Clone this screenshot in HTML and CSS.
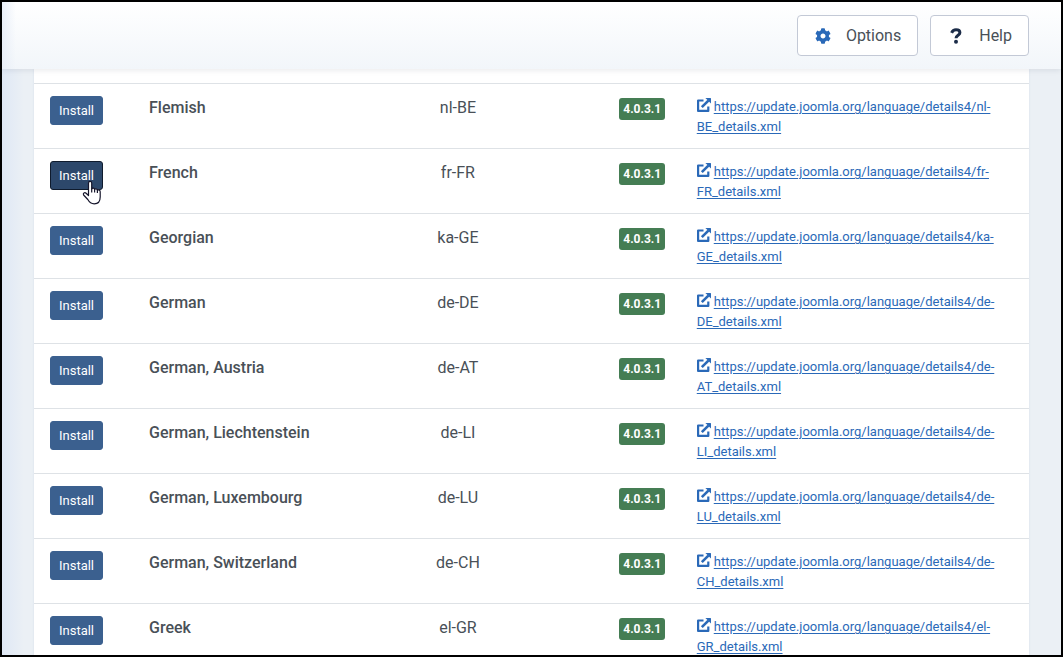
FILE: index.html
```
<!DOCTYPE html>
<html lang="en">
<head>
<meta charset="utf-8">
<title>Install Languages</title>
<link rel="stylesheet" href="styles.css">
</head>
<body>
<svg class="symbols" aria-hidden="true">
  <symbol id="external" viewBox="0 0 14 14">
    <path d="M6.500 2.500H1.100V12.900H11.300V8.500" fill="none" stroke="currentColor" stroke-width="2.200" stroke-linejoin="round"/>
    <path d="M4.800 9.200L11.400 2.600" fill="none" stroke="currentColor" stroke-width="2.600"/>
    <path d="M8.400 0H13.500Q14 0 14 .5V5.600z" fill="currentColor"/>
  </symbol>
</svg>
<header class="toolbar">
  <button class="tool" type="button">
    <svg class="tool-icon gear" viewBox="0 0 512 512" aria-hidden="true"><path fill="currentColor" d="M487.400 315.700l-42.600-24.600c4.300-23.200 4.300-47 0-70.200l42.600-24.600c4.900-2.800 7.100-8.600 5.500-14-11.100-35.600-30-67.800-54.700-94.600-3.800-4.100-10-5.100-14.800-2.300L380.800 110c-17.900-15.400-38.500-27.300-60.800-35.100V25.800c0-5.600-3.900-10.500-9.400-11.700-36.700-8.200-74.300-7.800-109.200 0-5.500 1.200-9.400 6.100-9.400 11.700V75c-22.200 7.900-42.800 19.800-60.800 35.100L88.700 85.500c-4.900-2.800-11-1.900-14.800 2.300-24.700 26.700-43.600 58.900-54.700 94.600-1.700 5.400.6 11.200 5.500 14L67.300 221c-4.300 23.200-4.300 47 0 70.200l-42.600 24.600c-4.900 2.800-7.100 8.600-5.500 14 11.100 35.600 30 67.800 54.700 94.600 3.800 4.100 10 5.100 14.800 2.300l42.600-24.600c17.900 15.400 38.500 27.300 60.800 35.100v49.200c0 5.600 3.900 10.500 9.400 11.700 36.700 8.200 74.300 7.800 109.200 0 5.500-1.200 9.400-6.100 9.400-11.700v-49.200c22.200-7.900 42.800-19.800 60.800-35.100l42.600 24.600c4.900 2.800 11 1.900 14.800-2.300 24.700-26.700 43.600-58.900 54.700-94.600 1.500-5.500-.7-11.300-5.600-14.100zM256 336c-44.100 0-80-35.900-80-80s35.900-80 80-80 80 35.900 80 80-35.900 80-80 80z"/></svg>
    Options
  </button>
  <button class="tool" type="button">
    <svg class="tool-icon question" viewBox="0 0 16 16" aria-hidden="true"><path d="M3.600 4.900C4.500 2.700 5.900 1.800 8 1.800c2.300 0 3.900 1 3.900 2.900 0 2.700-3.900 2.400-3.900 5.500" fill="none" stroke="currentColor" stroke-width="3"/><circle cx="8" cy="13.800" r="2" fill="currentColor"/></svg>
    Help
  </button>
</header>
<main class="page">
  <table class="languages">
    <colgroup><col class="col-action"><col class="col-name"><col><col class="col-version"><col class="col-location"></colgroup>
    <tbody>
      <tr>
        <td><button class="install" type="button">Install</button></td>
        <th scope="row">Flemish</th><td class="center">nl-BE</td>
        <td class="center"><span class="badge">4.0.3.1</span></td>
        <td class="location"><svg class="external" aria-hidden="true"><use href="#external"/></svg><a href="#">https://update.joomla.org/language/details4/nl-BE_details.xml</a></td>
      </tr>
      <tr>
        <td><span class="pointed"><button class="install active" type="button">Install</button><svg class="cursor" viewBox="0 0 20 25" aria-hidden="true"><path d="M6.500 15.500V3.200c0-2.400 3.200-2.400 3.200 0V9c.3-1.300 2.800-1.200 2.900.5.500-1.100 2.700-.9 2.800.9.600-1 2.800-.6 2.800 1.300V17c0 4.300-2 6.800-6 6.800-3.500 0-4.900-1.600-6.400-4.300L1.600 15c-1-1.900 1.100-3 2.500-1.800z" fill="#fff" stroke="#15152b" stroke-width="1.200" stroke-linejoin="round"/><path d="M9.700 8.500v4M12.600 9.500v3M15.400 10.500v2.500" fill="none" stroke="#15152b" stroke-width="1.200"/></svg></span></td>
        <th scope="row">French</th><td class="center">fr-FR</td>
        <td class="center"><span class="badge">4.0.3.1</span></td>
        <td class="location"><svg class="external" aria-hidden="true"><use href="#external"/></svg><a href="#">https://update.joomla.org/language/details4/fr-FR_details.xml</a></td>
      </tr>
      <tr>
        <td><button class="install" type="button">Install</button></td>
        <th scope="row">Georgian</th><td class="center">ka-GE</td>
        <td class="center"><span class="badge">4.0.3.1</span></td>
        <td class="location"><svg class="external" aria-hidden="true"><use href="#external"/></svg><a href="#">https://update.joomla.org/language/details4/ka-GE_details.xml</a></td>
      </tr>
      <tr>
        <td><button class="install" type="button">Install</button></td>
        <th scope="row">German</th><td class="center">de-DE</td>
        <td class="center"><span class="badge">4.0.3.1</span></td>
        <td class="location"><svg class="external" aria-hidden="true"><use href="#external"/></svg><a href="#">https://update.joomla.org/language/details4/de-DE_details.xml</a></td>
      </tr>
      <tr>
        <td><button class="install" type="button">Install</button></td>
        <th scope="row">German, Austria</th><td class="center">de-AT</td>
        <td class="center"><span class="badge">4.0.3.1</span></td>
        <td class="location"><svg class="external" aria-hidden="true"><use href="#external"/></svg><a href="#">https://update.joomla.org/language/details4/de-AT_details.xml</a></td>
      </tr>
      <tr>
        <td><button class="install" type="button">Install</button></td>
        <th scope="row">German, Liechtenstein</th><td class="center">de-LI</td>
        <td class="center"><span class="badge">4.0.3.1</span></td>
        <td class="location"><svg class="external" aria-hidden="true"><use href="#external"/></svg><a href="#">https://update.joomla.org/language/details4/de-LI_details.xml</a></td>
      </tr>
      <tr>
        <td><button class="install" type="button">Install</button></td>
        <th scope="row">German, Luxembourg</th><td class="center">de-LU</td>
        <td class="center"><span class="badge">4.0.3.1</span></td>
        <td class="location"><svg class="external" aria-hidden="true"><use href="#external"/></svg><a href="#">https://update.joomla.org/language/details4/de-LU_details.xml</a></td>
      </tr>
      <tr>
        <td><button class="install" type="button">Install</button></td>
        <th scope="row">German, Switzerland</th><td class="center">de-CH</td>
        <td class="center"><span class="badge">4.0.3.1</span></td>
        <td class="location"><svg class="external" aria-hidden="true"><use href="#external"/></svg><a href="#">https://update.joomla.org/language/details4/de-CH_details.xml</a></td>
      </tr>
      <tr>
        <td><button class="install" type="button">Install</button></td>
        <th scope="row">Greek</th><td class="center">el-GR</td>
        <td class="center"><span class="badge">4.0.3.1</span></td>
        <td class="location"><svg class="external" aria-hidden="true"><use href="#external"/></svg><a href="#">https://update.joomla.org/language/details4/el-GR_details.xml</a></td>
      </tr>
    </tbody>
  </table>
</main>
</body>
</html>
```
FILE: styles.css
```
* { box-sizing: border-box; }

body {
  display: flex;
  flex-direction: column;
  height: 100vh;
  margin: 0;
  border: 2px solid #000;
  overflow: hidden;
  background: #ebf0f5;
  color: #495057;
  font: 16px/24px Roboto, "Liberation Sans", sans-serif;
}

.symbols { display: none; }

.toolbar {
  z-index: 1;
  flex: none;
  display: flex;
  justify-content: flex-end;
  gap: 12px;
  padding: 13px 32px;
  background: linear-gradient(90deg, #e9eff8, #e9eff800 14px), linear-gradient(#fff, #f2f6fa);
  box-shadow: 0 1px 6px rgba(20, 30, 50, 0.1);
}

.tool {
  display: flex;
  align-items: center;
  gap: 14px;
  height: 41px;
  padding: 0 16px;
  border: 1px solid #c3c9d6;
  border-radius: 4px;
  background: #fff;
  color: #495057;
  font: inherit;
}

.tool-icon { width: 18px; height: 16px; }
.gear { color: #2a69b8; }
.question { color: #1c2c48; }

.page {
  flex: 1;
  min-height: 0;
  padding: 0 32px;
  background: linear-gradient(90deg, #dfe8f5, #ebf0f5 22px);
}

.languages {
  width: 100%;
  padding-top: 14px;
  border-spacing: 0;
  table-layout: fixed;
  background: #fff;
  box-shadow: 0 0 2px #d5dcea;
}

.col-action { width: 99px; }
.col-name { width: 18%; }
.col-version { width: 77px; }
.col-location { width: 35%; }

td, th {
  height: 65px;
  padding: 12px 16px;
  border-top: 1px solid #dee2e6;
  vertical-align: top;
  text-align: left;
}

th { font-weight: 500; white-space: nowrap; }

.center { padding-right: 0; padding-left: 0; text-align: center; }

.install {
  display: block;
  width: 53px;
  height: 29px;
  padding: 0;
  border: 1px solid #3b608f;
  border-radius: 3px;
  background: #3b608f;
  color: #fff;
  font: 13px/20px Roboto, "Liberation Sans", sans-serif;
}

.active { border-color: #0f1b2d; background: #2d486b; }

.pointed { display: block; position: relative; }

.cursor {
  position: absolute;
  top: 19px;
  left: 32px;
  width: 20px;
  height: 25px;
}

.badge {
  display: inline-block;
  padding: 0 4px;
  border-radius: 3px;
  background: #457d54;
  color: #fff;
  font-size: 12px;
  font-weight: 700;
  line-height: 22px;
}

.location {
  padding-top: 13px;
  padding-bottom: 11px;
  font-size: 13px;
  line-height: 20px;
}

.location a { color: #2a69b8; text-underline-offset: 2px; }

.external {
  width: 14px;
  height: 14px;
  margin-right: 3px;
  color: #2a69b8;
  vertical-align: -1px;
}
```
